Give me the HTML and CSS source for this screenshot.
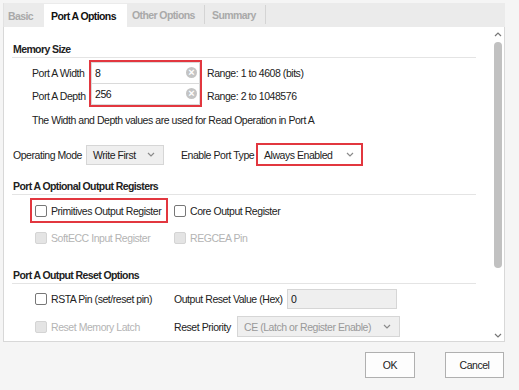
FILE: index.html
```html
<!DOCTYPE html>
<html lang="en">
<head>
    <meta charset="UTF-8">
    <title>Block Memory Generator - Port A Options</title>
    <link rel="stylesheet" href="styles.css">
</head>
<body>
    <div class="dialog">
        <div class="tabs">
            <span class="tab basic">Basic</span>
            <span class="tab active">Port A Options</span>
            <span class="tab other">Other Options</span>
            <span class="tab summary">Summary</span>
        </div>

        <div class="page">
            <div class="content">
                <h4 class="section">Memory Size</h4>

                <div class="size-group">
                    <div class="labels">
                        <span>Port A Width</span>
                        <span>Port A Depth</span>
                    </div>
                    <div class="marked inputs">
                        <div class="field">8<span class="clear">&times;</span></div>
                        <div class="field">256<span class="clear">&times;</span></div>
                    </div>
                    <div class="ranges">
                        <span>Range: 1 to 4608 (bits)</span>
                        <span>Range: 2 to 1048576</span>
                    </div>
                </div>

                <p class="note">The Width and Depth values are used for Read Operation in Port A</p>

                <div class="mode-row">
                    <span class="mode-label">Operating Mode</span>
                    <div class="select mode">Write First <svg class="chev" viewBox="0 0 8 5"><polyline points="1,1 4,4 7,1"/></svg></div>
                    <span class="port-type">Enable Port Type</span>
                    <div class="marked">
                        <div class="select plain">Always Enabled <svg class="chev" viewBox="0 0 8 5"><polyline points="1,1 4,4 7,1"/></svg></div>
                    </div>
                </div>

                <h4 class="section second">Port A Optional Output Registers</h4>

                <div class="options">
                    <div class="cell">
                        <label class="marked check"><span class="box"></span>Primitives Output Register</label>
                    </div>
                    <div class="cell right">
                        <label class="check"><span class="box"></span>Core Output Register</label>
                    </div>
                    <div class="cell pad lower">
                        <label class="check disabled"><span class="box"></span>SoftECC Input Register</label>
                    </div>
                    <div class="cell right lower">
                        <label class="check disabled"><span class="box"></span>REGCEA Pin</label>
                    </div>
                </div>

                <h4 class="section third">Port A Output Reset Options</h4>

                <div class="options reset">
                    <div class="cell pad">
                        <label class="check"><span class="box"></span>RSTA Pin (set/reset pin)</label>
                    </div>
                    <div class="cell right">
                        <span class="hex-label">Output Reset Value (Hex)</span>
                        <div class="field grey hex">0</div>
                    </div>
                    <div class="cell pad lower">
                        <label class="check disabled"><span class="box"></span>Reset Memory Latch</label>
                    </div>
                    <div class="cell right lower">
                        <span class="priority-label">Reset Priority</span>
                        <div class="select priority">CE (Latch or Register Enable) <svg class="chev" viewBox="0 0 8 5"><polyline points="1,1 4,4 7,1"/></svg></div>
                    </div>
                </div>
            </div>

            <div class="scrollbar">
                <svg class="arrow" viewBox="0 0 8 5"><polyline points="1,4 4,1 7,4"/></svg>
                <div class="thumb"></div>
                <svg class="arrow down" viewBox="0 0 8 5"><polyline points="1,1 4,4 7,1"/></svg>
            </div>
        </div>

        <div class="footer">
            <button class="ok">OK</button>
            <button class="cancel">Cancel</button>
        </div>
    </div>
</body>
</html>
```

FILE: styles.css
```css
body {
    margin: 0;
    background-color: #f5f5f5;
    font-family: 'Liberation Sans', Arial, sans-serif;
    font-size: 10.5px;
    letter-spacing: -0.45px;
    color: #222;
}
.dialog {
    padding: 3px 14px 0 3px;
}
.tabs {
    display: flex;
    height: 24px;
    background-color: #ebebeb;
    border-left: 1px solid #e2e2e2;
}
.tab {
    display: flex;
    align-items: center;
    box-sizing: border-box;
    height: 23px;
    margin-top: 1px;
    padding-left: 7px;
    font-weight: bold;
    letter-spacing: -0.6px;
    color: #a9a9a9;
}
.tab.basic {
    width: 40px;
    padding-left: 4px;
}
.tab.active {
    width: 83px;
    background-color: #fff;
    color: #111;
}
.tab.other {
    width: 78px;
    padding-left: 5px;
    height: 19px;
    margin-top: 2px;
    border-right: 1px solid #d4d4d4;
}
.tab.summary {
    width: 61px;
    height: 19px;
    margin-top: 2px;
    border-right: 1px solid #d4d4d4;
}
.page {
    display: flex;
    height: 314px;
    background-color: #fff;
    border: 1px solid #d8d8d8;
    border-top: none;
}
.content {
    flex: 1;
    padding-left: 9px;
}
.section {
    width: 463px;
    margin: 15px 0 0 -1px;
    padding: 0 0 1px 1px;
    height: 14px;
    line-height: 14px;
    font-size: 10.5px;
    letter-spacing: -0.6px;
    border-bottom: 1px solid #e4e4e4;
}
.section.second {
    margin-top: 13px;
}
.section.third {
    margin-top: 20px;
}
.size-group {
    display: flex;
    margin-top: 2px;
}
.labels,
.ranges {
    display: flex;
    flex-direction: column;
    justify-content: space-around;
    padding: 1px 0 0;
}
.labels {
    width: 57px;
    padding-left: 19px;
}
.ranges {
    padding-left: 5px;
}
.marked {
    border: 2px solid #e2373f;
}
.inputs {
    width: 109px;
}
.field {
    position: relative;
    height: 20px;
    line-height: 20px;
    padding-left: 3px;
    border: 1px solid #dadada;
    color: #111;
}
.field + .field {
    border-top: none;
}
.clear {
    position: absolute;
    right: 2px;
    top: 4px;
    width: 11px;
    height: 11px;
    border-radius: 50%;
    background-color: #c4c4c4;
    color: #fff;
    font-size: 11px;
    line-height: 11px;
    letter-spacing: 0;
    text-align: center;
    font-weight: bold;
}
.note {
    margin: 5px 0 0 19px;
    height: 16px;
    line-height: 16px;
}
.mode-row {
    display: flex;
    align-items: center;
    margin-top: 15px;
    height: 23px;
}
.mode-label {
    width: 73px;
}
.select {
    display: flex;
    align-items: center;
    justify-content: space-between;
    box-sizing: border-box;
    height: 20px;
    padding: 0 8px 0 6px;
    background-color: #efefef;
    border: 1px solid #d6d6d6;
}
.mode {
    width: 78px;
}
.port-type {
    width: 75px;
    margin-left: 17px;
}
.select.plain {
    width: 103px;
    height: 19px;
    background-color: #fff;
    border: none;
    padding: 0 7px 0 6px;
}
.chev {
    width: 8px;
    height: 5px;
    fill: none;
    stroke: #8a8a8a;
    stroke-width: 1.2;
}
.options {
    display: grid;
    grid-template-columns: 144px auto;
    margin-left: 17px;
    margin-top: 3px;
}
.cell {
    display: flex;
    align-items: center;
    height: 25px;
}
.cell.pad {
    padding-left: 5px;
}
.cell.lower {
    margin-top: 5px;
    height: 20px;
}
.check {
    display: flex;
    align-items: center;
    height: 100%;
}
.check.marked {
    box-sizing: border-box;
    padding: 0 5px 0 3px;
}
.box {
    width: 10px;
    height: 10px;
    margin-right: 4px;
    border: 1px solid #777;
    border-radius: 2px;
    background-color: #fff;
}
.check.disabled {
    color: #b4b4b4;
}
.check.disabled .box {
    background-color: #e4e4e4;
    border-color: #d4d4d4;
}
.options.reset {
    margin-top: 5px;
}
.reset .cell {
    height: 20px;
}
.reset .cell.lower {
    margin-top: 7px;
    height: 21px;
}
.hex-label {
    width: 113px;
}
.field.grey {
    box-sizing: border-box;
    height: 20px;
    line-height: 18px;
    background-color: #efefef;
    border-color: #d6d6d6;
}
.hex {
    width: 110px;
}
.priority-label {
    width: 63px;
}
.priority {
    width: 163px;
    height: 21px;
    color: #999;
}
.scrollbar {
    display: flex;
    flex-direction: column;
    align-items: center;
    width: 12px;
}
.arrow {
    width: 8px;
    height: 5px;
    margin-top: 5px;
    fill: none;
    stroke: #777;
    stroke-width: 1.2;
}
.thumb {
    width: 8px;
    height: 226px;
    margin-top: 5px;
    border-radius: 4px;
    background-color: #c1c1c1;
}
.arrow.down {
    margin-top: auto;
    margin-bottom: 3px;
}
.footer {
    display: flex;
    justify-content: flex-end;
    gap: 30px;
    padding-top: 10px;
    padding-right: 1px;
}
button {
    height: 26px;
    border: 1px solid #b0b0b0;
    background-color: #fdfdfd;
    font-family: 'Liberation Sans', Arial, sans-serif;
    font-size: 10.5px;
    letter-spacing: -0.45px;
    color: #222;
}
.ok {
    width: 50px;
}
.cancel {
    width: 59px;
}
```
